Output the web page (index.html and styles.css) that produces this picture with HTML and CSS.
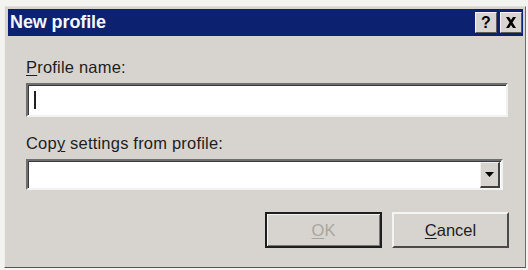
FILE: index.html
```html
<!DOCTYPE html>
<html>
<head>
<meta charset="utf-8">
<link rel="stylesheet" href="styles.css">
</head>
<body>
<div class="dialog">
  <div class="titlebar">
    <span class="title">New profile</span>
    <div class="tb-buttons">
      <span class="tb-btn">?</span>
      <span class="tb-btn">
        <svg width="12" height="11" viewBox="0 0 12 11"><path d="M1 0h3l2 3 2-3h3L7.5 5.5 11 11H8L6 8 4 11H1l3.5-5.5z" fill="#000"/></svg>
      </span>
    </div>
  </div>
  <div class="content">
    <label class="label"><u>P</u>rofile name:</label>
    <div class="textbox"><span class="caret"></span></div>
    <label class="label label2">Cop<u>y</u> settings from profile:</label>
    <div class="combo">
      <div class="combo-field"></div>
      <div class="combo-btn">
        <svg width="9" height="5" viewBox="0 0 9 5"><path d="M0 0h9L4.5 5z" fill="#000"/></svg>
      </div>
    </div>
    <div class="actions">
      <button class="btn btn-default" disabled><u>O</u>K</button>
      <button class="btn"><u>C</u>ancel</button>
    </div>
  </div>
</div>
</body>
</html>
```

FILE: styles.css
```css
* { box-sizing: border-box; }
html, body { margin: 0; padding: 0; }
body {
  width: 528px;
  height: 270px;
  background: #f3f3ef;
  font-family: "Liberation Sans", Arial, sans-serif;
  overflow: hidden;
  padding: 6px 0 0 4px;
}
.dialog {
  width: 522px;
  height: 262px;
  background: #d7d4cf;
  border-top: 1px solid #e2e0dc;
  border-left: 1px solid #eeece8;
  border-right: 1px solid #6c6c6c;
  border-bottom: 1px solid #555;
  padding: 2px 2px 2px 3px;
  display: flex;
  flex-direction: column;
}
.titlebar {
  height: 27px;
  background: #0c2170;
  display: flex;
  align-items: center;
  justify-content: space-between;
  padding: 0 1px 0 2px;
}
.title {
  color: #f4f6ff;
  font-weight: bold;
  font-size: 18px;
  letter-spacing: -0.1px;
}
.tb-buttons { display: flex; gap: 3px; }
.tb-btn {
  width: 22px;
  height: 21px;
  background: #d8d5d0;
  border-top: 1px solid #f4f4f2;
  border-left: 1px solid #f4f4f2;
  border-right: 1px solid #5a5a5a;
  border-bottom: 1px solid #5a5a5a;
  display: flex;
  align-items: center;
  justify-content: center;
  font-weight: bold;
  font-size: 16px;
  color: #000;
  line-height: 1;
}
.content {
  flex: 1;
  padding: 21px 0 0 18px;
  display: flex;
  flex-direction: column;
}
.label {
  font-size: 16.5px;
  color: #1e1e1e;
  line-height: 20px;
  height: 20px;
  letter-spacing: 0.2px;
}
.label u { text-decoration-thickness: 1px; text-underline-offset: 2px; }
.textbox {
  margin-top: 6px;
  width: 482px;
  height: 34px;
  background: #fff;
  border-top: 2px solid #6e6e6e;
  border-left: 2px solid #6e6e6e;
  border-right: 2px solid #f2f2f0;
  border-bottom: 2px solid #f2f2f0;
  box-shadow: inset 1px 1px 0 #3a3a3a;
  padding: 6px 0 0 6px;
}
.caret {
  display: block;
  width: 2px;
  height: 18px;
  background: #222;
}
.label2 { margin-top: 16px; }
.combo {
  margin-top: 6px;
  width: 477px;
  height: 31px;
  background: #fff;
  border-top: 2px solid #6e6e6e;
  border-left: 2px solid #6e6e6e;
  border-right: 2px solid #f2f2f0;
  border-bottom: 2px solid #f2f2f0;
  box-shadow: inset 1px 1px 0 #3a3a3a;
  display: flex;
  padding: 1px 1px 0 1px;
}
.combo-field { flex: 1; }
.combo-btn {
  width: 20px;
  height: 26px;
  background: #d7d4cf;
  border-top: 1px solid #f0f0ee;
  border-left: 1px solid #f0f0ee;
  border-right: 2px solid #404040;
  border-bottom: 2px solid #404040;
  display: flex;
  align-items: center;
  justify-content: center;
}
.actions {
  margin-top: 22px;
  display: flex;
  gap: 10px;
  padding-left: 239px;
}
.btn {
  width: 117px;
  height: 36px;
  background: #d7d4cf;
  font-family: "Liberation Sans", Arial, sans-serif;
  font-size: 16.5px;
  color: #1e1e1e;
  border-top: 2px solid #f4f4f2;
  border-left: 2px solid #f4f4f2;
  border-right: 2px solid #4a4a4a;
  border-bottom: 2px solid #4a4a4a;
  padding: 0;
  margin: 0;
}
.btn u { text-underline-offset: 2px; }
.btn-default {
  border: 2px solid #1e1e1e;
  box-shadow: inset 1px 1px 0 #f4f4f2, inset -1px -1px 0 #7a7a7a;
  color: #a8a6a2;
}
```
